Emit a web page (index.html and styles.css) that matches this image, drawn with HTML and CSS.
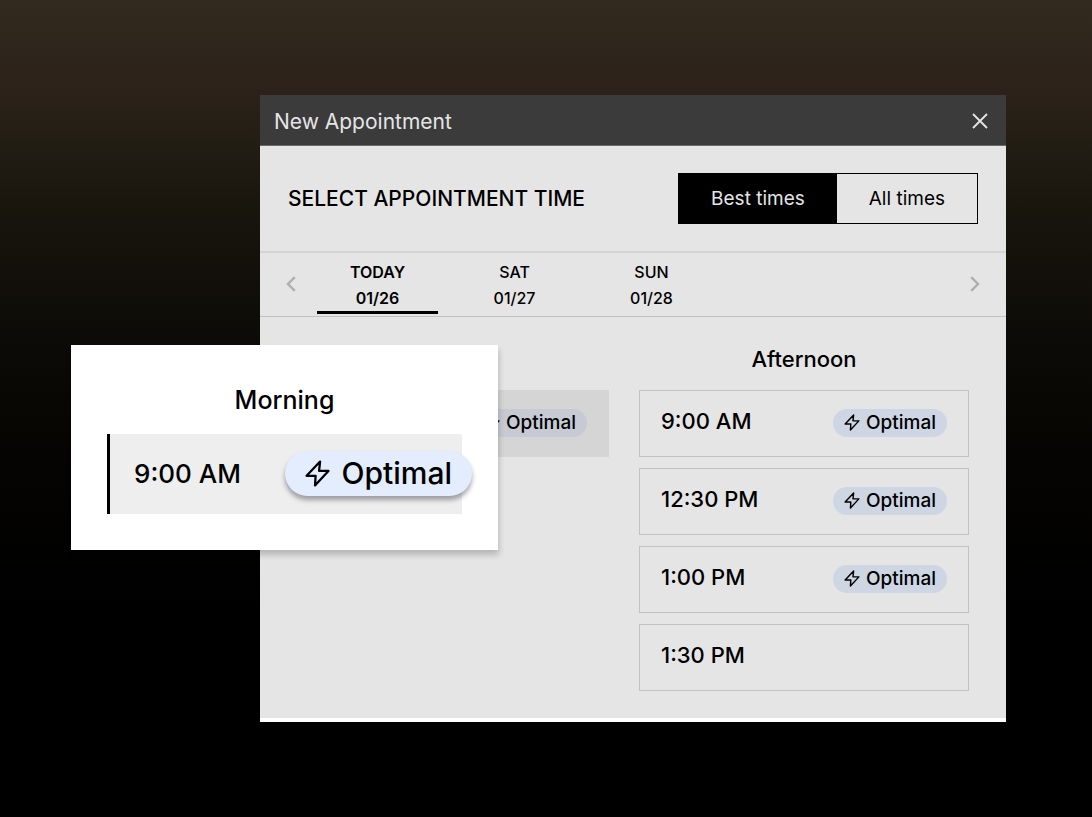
FILE: index.html
```html
<!DOCTYPE html>
<html lang="en">
<head>
<meta charset="utf-8">
<meta name="viewport" content="width=device-width, initial-scale=1">
<title>New Appointment</title>
<link rel="stylesheet" href="styles.css">
</head>
<body>
<svg class="sprite" aria-hidden="true">
  <symbol id="bolt" viewBox="0 0 24 26">
    <path d="M14.500 1.500 1.500 15.200h8.700L9.600 24.500 22.500 10.500h-9z" fill="none" stroke="currentColor" stroke-width="2.200" stroke-linejoin="round"/>
  </symbol>
</svg>
<main class="stage">
  <section class="dialog" aria-labelledby="dialog-title">
    <header class="titlebar">
      <h1 class="title" id="dialog-title">New Appointment</h1>
      <button class="icon-button close" type="button" aria-label="Close">
        <svg width="16" height="16" viewBox="0 0 16 16" aria-hidden="true"><path d="M1 1l14 14M15 1L1 15" stroke="currentColor" stroke-width="1.8" fill="none"/></svg>
      </button>
    </header>
    <div class="toolbar">
      <h2 class="toolbar-title">SELECT APPOINTMENT TIME</h2>
      <div class="toggle">
        <button class="toggle-option selected" type="button" aria-pressed="true">Best times</button>
        <button class="toggle-option" type="button" aria-pressed="false">All times</button>
      </div>
    </div>
    <nav class="days" aria-label="Days">
      <button class="icon-button arrow" type="button" aria-label="Previous days">
        <svg width="10" height="16" viewBox="0 0 10 16" aria-hidden="true"><path d="M8.800 1.200 2 8l6.800 6.800" stroke="currentColor" stroke-width="2.400" fill="none"/></svg>
      </button>
      <div class="day-list">
        <button class="day current" type="button"><span>TODAY</span><span>01/26</span></button>
        <button class="day" type="button"><span>SAT</span><span>01/27</span></button>
        <button class="day" type="button"><span>SUN</span><span>01/28</span></button>
      </div>
      <button class="icon-button arrow" type="button" aria-label="Next days">
        <svg width="10" height="16" viewBox="0 0 10 16" aria-hidden="true"><path d="M1.200 1.200 8 8l-6.800 6.800" stroke="currentColor" stroke-width="2.400" fill="none"/></svg>
      </button>
    </nav>
    <div class="slots">
      <h3 class="slots-title">Afternoon</h3>
      <div class="slot-list">
        <button class="slot picked" type="button">
          <span class="badge"><svg class="badge-icon" aria-hidden="true"><use href="#bolt"/></svg>Optimal</span>
        </button>
      </div>
      <div class="slot-list">
        <button class="slot" type="button"><span class="time">9:00 AM</span><span class="badge"><svg class="badge-icon" aria-hidden="true"><use href="#bolt"/></svg>Optimal</span></button>
        <button class="slot" type="button"><span class="time">12:30 PM</span><span class="badge"><svg class="badge-icon" aria-hidden="true"><use href="#bolt"/></svg>Optimal</span></button>
        <button class="slot" type="button"><span class="time">1:00 PM</span><span class="badge"><svg class="badge-icon" aria-hidden="true"><use href="#bolt"/></svg>Optimal</span></button>
        <button class="slot" type="button"><span class="time">1:30 PM</span></button>
      </div>
    </div>
    <aside class="callout">
      <h3 class="callout-title">Morning</h3>
      <button class="callout-slot" type="button">
        <span class="callout-time">9:00 AM</span>
        <span class="badge large"><svg class="badge-icon" aria-hidden="true"><use href="#bolt"/></svg>Optimal</span>
      </button>
    </aside>
  </section>
</main>
</body>
</html>
```
FILE: styles.css
```css
* {
  box-sizing: border-box;
}

body {
  margin: 0;
  background: #000;
  font-family: Inter, "Liberation Sans", sans-serif;
  color: #000;
}

h1, h2, h3 {
  margin: 0;
  font-weight: 500;
}

button {
  margin: 0;
  padding: 0;
  border: 0;
  background: none;
  color: inherit;
  font: inherit;
  cursor: pointer;
}

.sprite {
  display: none;
}

.stage {
  min-height: 100vh;
  padding: 95px 86px 95px 260px;
  background: linear-gradient(#32291f, #2b2118 12%, #231e14 17%, #18150d 26%, #0d0b07 41%, #050402 56%, #000 74%);
}

.dialog {
  position: relative;
  background: #e5e5e5;
  border-bottom: 4px solid #fff;
}

.titlebar {
  display: flex;
  align-items: center;
  justify-content: space-between;
  height: 51px;
  padding: 2px 18px 0 14px;
  background: #3b3b3b;
  border-bottom: 1px solid #6a6a6a;
  color: #e5e5e5;
}

.title {
  font-size: 21px;
  font-weight: 400;
}

.icon-button {
  display: flex;
}

.toolbar {
  display: flex;
  align-items: center;
  justify-content: space-between;
  padding: 27px 28px;
  border-bottom: 2px solid #d5d5d5;
}

.toolbar-title {
  font-size: 21px;
}

.toggle {
  display: flex;
  height: 51px;
  border: 1px solid #000;
  font-size: 19px;
}

.toggle-option {
  padding: 0 32px;
}

.toggle-option.selected {
  background: #000;
  color: #e5e5e5;
}

.days {
  display: flex;
  align-items: center;
  gap: 21px;
  height: 64px;
  padding: 0 26px 2px 26px;
  border-bottom: 1px solid #c2c2c2;
}

.arrow {
  color: #afafaf;
}

.day-list {
  display: flex;
  flex: 1;
  gap: 16px;
}

.day {
  display: flex;
  flex-direction: column;
  align-items: center;
  width: 121px;
  padding-top: 6px;
  border-bottom: 3px solid transparent;
  font-size: 16px;
  font-weight: 500;
  line-height: 26px;
}

.day.current {
  border-color: #000;
  font-weight: 600;
}

.slots {
  display: grid;
  grid-template-columns: 1fr 1fr;
  column-gap: 30px;
  row-gap: 17px;
  padding: 28px 37px 27px 19px;
}

.slots-title {
  grid-column: 2;
  font-size: 22px;
  line-height: 28px;
  text-align: center;
}

.slot-list {
  display: flex;
  flex-direction: column;
  gap: 11px;
}

.slot {
  display: flex;
  align-items: center;
  justify-content: space-between;
  height: 67px;
  padding: 0 21px 2px;
  border: 1px solid #c2c2c6;
}

.slot.picked {
  justify-content: flex-end;
  background: #d5d5d5;
  border-color: #d5d5d5;
}

.time {
  padding-bottom: 4px;
  font-size: 22px;
  font-weight: 500;
}

.badge {
  display: flex;
  align-items: center;
  gap: 6px;
  height: 28px;
  padding: 0 11px;
  border-radius: 14px;
  background: #cfd6e3;
  font-size: 19px;
  font-weight: 500;
}

.picked .badge {
  background: #c7cad2;
}

.badge-icon {
  width: 16px;
  height: 17px;
}

.callout {
  position: absolute;
  top: 250px;
  left: -189px;
  right: 508px;
  padding: 36px;
  background: #fff;
  box-shadow: 1px 5px 6px rgba(0, 0, 20, 0.2);
}

.callout-title {
  padding-bottom: 15px;
  font-size: 25px;
  line-height: 38px;
  text-align: center;
}

.callout-slot {
  display: flex;
  align-items: center;
  justify-content: space-between;
  width: 100%;
  height: 80px;
  padding-bottom: 2px;
  padding-left: 24px;
  border-left: 3px solid #000;
  background: #eee;
}

.callout-time {
  font-size: 26px;
  font-weight: 500;
}

.badge.large {
  gap: 11px;
  height: 45px;
  margin-right: -10px;
  padding: 0 20px;
  border-radius: 23px;
  background: #e4edfd;
  box-shadow: 0 4px 5px rgba(0, 0, 20, 0.35);
  font-size: 30px;
}

.large .badge-icon {
  width: 25px;
  height: 27px;
}
```
